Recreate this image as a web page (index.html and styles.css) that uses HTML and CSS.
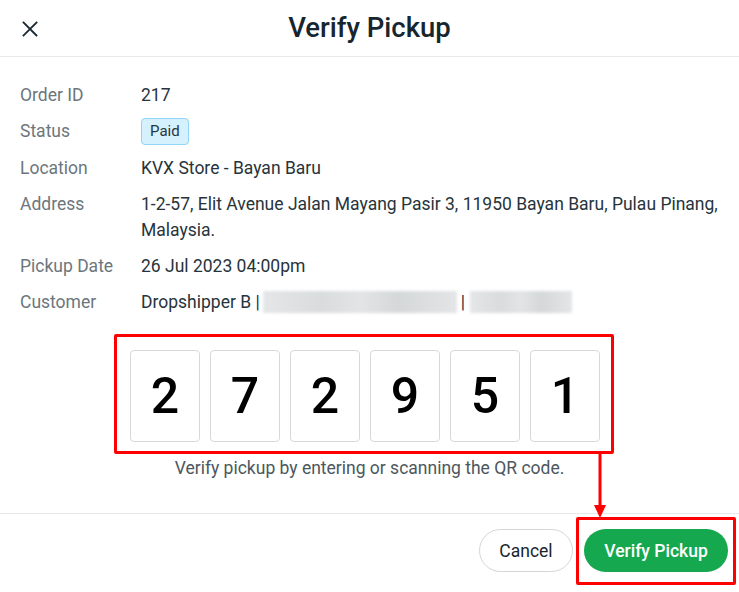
FILE: index.html
```html
<!DOCTYPE html>
<html>
<head>
<meta charset="utf-8">
<link rel="stylesheet" href="styles.css">
</head>
<body>
<div class="modal">
  <header class="head">
    <button class="close" aria-label="Close">
      <svg width="16" height="16" viewBox="0 0 16 16"><path d="M1.5 1.5 L14.5 14.5 M14.5 1.5 L1.5 14.5" stroke="#1b2b33" stroke-width="1.8" fill="none" stroke-linecap="square"/></svg>
    </button>
    <h1 class="title">Verify Pickup</h1>
  </header>
  <section class="body">
    <dl class="info">
      <dt>Order ID</dt><dd>217</dd>
      <dt>Status</dt><dd><span class="badge">Paid</span></dd>
      <dt>Location</dt><dd>KVX Store - Bayan Baru</dd>
      <dt>Address</dt><dd>1-2-57, Elit Avenue Jalan Mayang Pasir 3, 11950 Bayan Baru, Pulau Pinang, Malaysia.</dd>
      <dt>Pickup Date</dt><dd>26 Jul 2023 04:00pm</dd>
      <dt>Customer</dt><dd class="cust">Dropshipper B |<span class="blur b1"></span>|<span class="blur b2"></span></dd>
    </dl>
    <div class="code-wrap">
      <div class="code-hl">
        <div class="digit">2</div>
        <div class="digit">7</div>
        <div class="digit">2</div>
        <div class="digit">9</div>
        <div class="digit">5</div>
        <div class="digit">1</div>
      </div>
      <p class="hint">Verify pickup by entering or scanning the QR code.</p>
    </div>
  </section>
  <footer class="foot">
    <button class="btn cancel">Cancel</button>
    <button class="btn verify">Verify Pickup</button>
  </footer>
  <svg class="arrow" width="16" height="70" viewBox="0 0 16 70"><path d="M8 2 V56" stroke="#ff0000" stroke-width="3"/><path d="M2 55 H14 L8 68 Z" fill="#ff0000"/></svg>
  <div class="btn-hl"></div>
</div>
</body>
</html>
```

FILE: styles.css
```css
* { box-sizing: border-box; }
html, body { margin: 0; padding: 0; background: #fff; }
body { font-family: Roboto, "Noto Sans", Arial, sans-serif; color: #27343b; }
.modal { position: relative; width: 739px; height: 592px; background: #fff; }
.head {
  height: 57px;
  border-bottom: 1px solid #e6e8ea;
  display: flex;
  align-items: center;
  justify-content: center;
  position: relative;
}
.close {
  position: absolute;
  left: 21px;
  top: 20px;
  width: 18px;
  height: 18px;
  padding: 1px;
  border: 0;
  background: none;
  display: flex;
}
.title {
  margin: 0;
  font-size: 27.5px;
  font-weight: 500;
  color: #17262e;
  position: relative;
  top: -1px;
}
.body { padding: 25px 20px 0 20px; height: 457px; border-bottom: 1px solid #e6e8ea; }
.info {
  margin: 0;
  display: grid;
  grid-template-columns: 121px 1fr;
  row-gap: 10px;
  font-size: 17.5px;
  line-height: 26px;
}
.info dt { color: #6c767c; }
.info dd { margin: 0; color: #27343b; }
.badge {
  display: inline-block;
  height: 27px;
  line-height: 25px;
  padding: 0 8px;
  font-size: 15px;
  background: #d5f1fd;
  border: 1px solid #90d5f5;
  border-radius: 4px;
  color: #27343b;
  vertical-align: top;
}
.cust { display: flex; align-items: center; }
.blur {
  display: inline-block;
  height: 22px;
  background: linear-gradient(90deg, #e4e6e7 0%, #d9dcdd 30%, #e2e4e5 50%, #d5d8d9 70%, #e3e5e6 100%);
  filter: blur(1.5px);
}
.b1 { width: 194px; margin: 0 4px 0 3px; }
.b2 { width: 102px; margin-left: 5px; }
.code-wrap { display: flex; flex-direction: column; align-items: center; margin-top: 19px; }
.code-hl {
  width: 500px;
  height: 120px;
  border: 3px solid #ff0000;
  border-radius: 2px;
  padding: 13px 0 0 13px;
  display: flex;
  gap: 10px;
  align-self: flex-start;
  margin-left: 94px;
}
.digit {
  width: 70px;
  height: 92px;
  border: 1px solid #d8d8d8;
  border-radius: 4px;
  display: flex;
  align-items: center;
  justify-content: center;
  font-size: 50px;
  font-weight: 500;
  color: #000;
}
.hint {
  margin: 3px 0 0 0;
  font-size: 17.5px;
  line-height: 22px;
  color: #4c575d;
}
.foot {
  display: flex;
  justify-content: flex-end;
  gap: 11px;
  padding: 15px 11px 0 0;
}
.btn {
  height: 43px;
  border-radius: 22px;
  font-family: Roboto, "Noto Sans", Arial, sans-serif;
  font-size: 17.5px;
  cursor: pointer;
}
.cancel {
  width: 94px;
  background: #fff;
  border: 1px solid #d3d6d8;
  color: #17262e;
}
.verify {
  width: 144px;
  background: #15a84e;
  border: 0;
  color: #fff;
  font-weight: 500;
}
.arrow { position: absolute; left: 592px; top: 450px; }
.btn-hl {
  position: absolute;
  left: 576px;
  top: 517px;
  width: 160px;
  height: 68px;
  border: 3px solid #ff0000;
  border-radius: 2px;
}
```
